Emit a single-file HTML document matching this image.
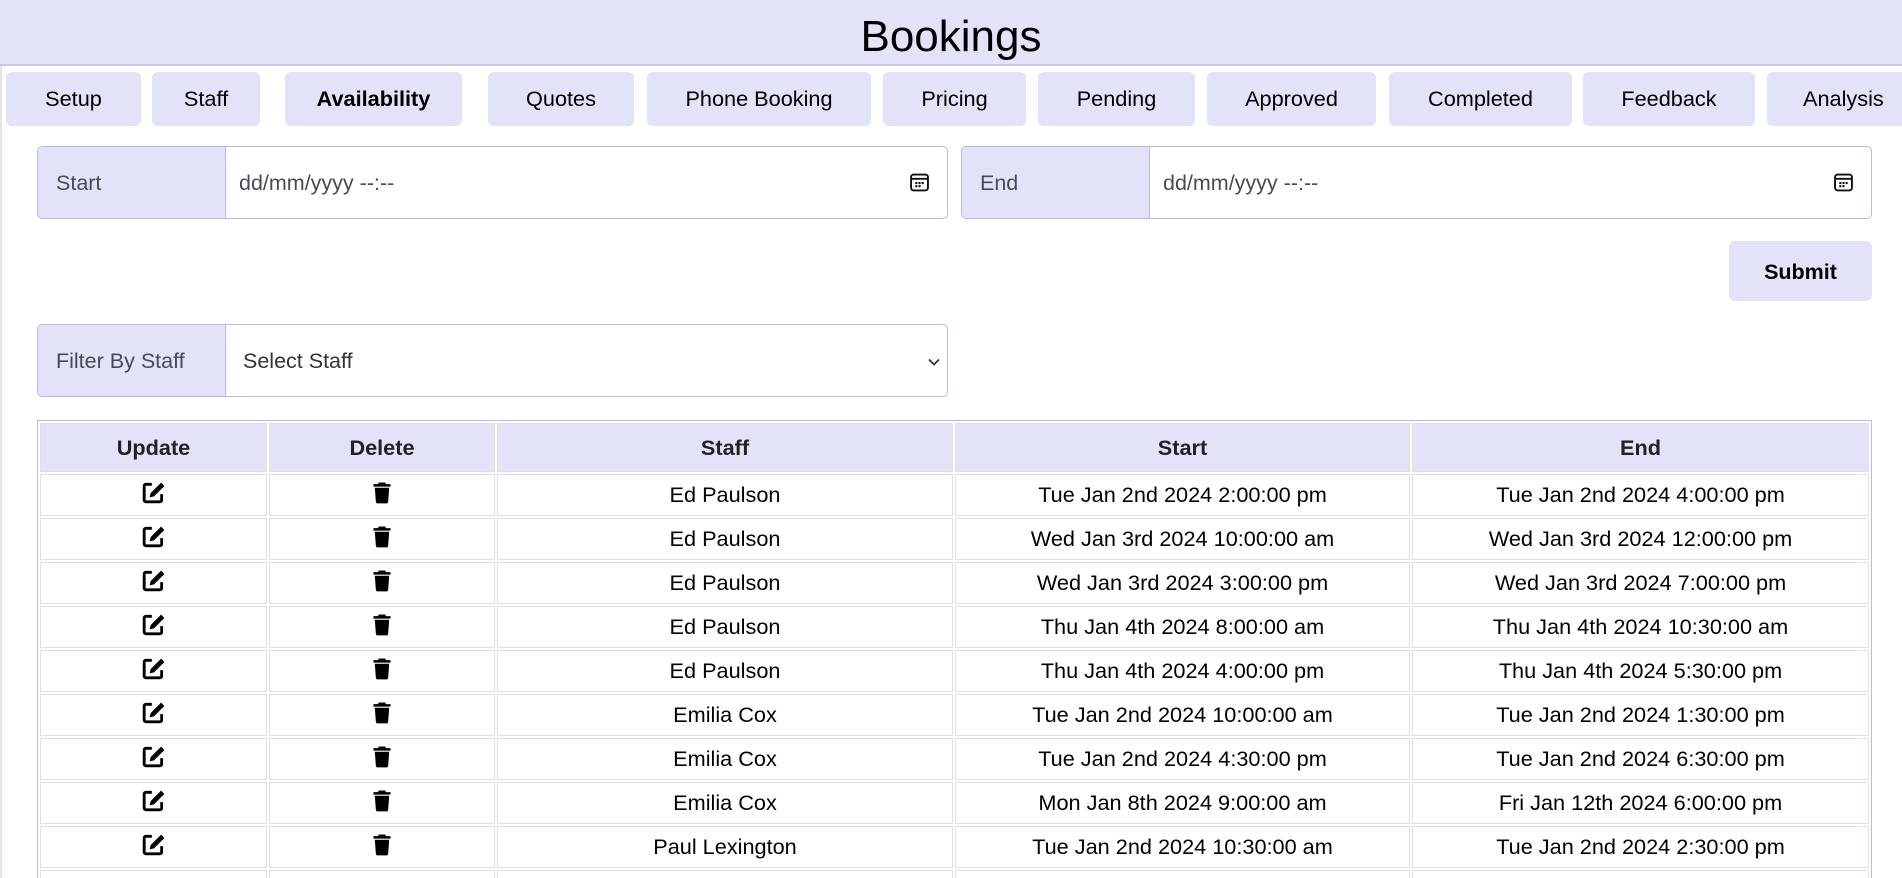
<!DOCTYPE html>
<html><head><meta charset="utf-8"><style>
*{box-sizing:border-box}
html,body{margin:0;width:1902px;height:878px;overflow:hidden}
body{background:#fff;font-family:"Liberation Sans",Arial,sans-serif;color:#000}
.wrap{position:relative;width:1902px;height:878px;overflow:hidden}
.page{position:absolute;left:0;top:0;width:1902px;height:878px;border-left:2px solid #e4e4e4;border-top:2px solid #e4e4e4}
.hdr{position:absolute;left:0;top:0;width:1902px;height:66px;background:#e2e2f8;border-bottom:2px solid #c9c9f0;text-align:center;font-size:44px;line-height:74px}
.tab{position:absolute;top:72px;height:54px;background:#e2e2f8;border-radius:6px;font-size:21.7px;line-height:54px;text-align:center}
.grp{position:absolute;height:73px;border:1.5px solid #b8b8f0;border-radius:5px;overflow:hidden;background:#fff}
.lbl{position:absolute;left:0;top:0;bottom:0;background:#e2e2f8;border-right:1.5px solid #b8b8f0;font-size:21.5px;color:#444c55;line-height:73px;padding-left:18px}
.val{position:absolute;top:0;line-height:73px;font-size:21.5px;color:#444c55}
.cal{position:absolute;top:26px}
.btn{position:absolute;left:1729px;top:241px;width:143px;height:60px;background:#e2e2f8;border-radius:6px;font-weight:bold;font-size:21.5px;line-height:62px;text-align:center}
table{position:absolute;left:37px;top:420px;width:1835px;border:1.5px solid #b8b8f0;border-collapse:separate;border-spacing:2.5px;padding:0}
th,td{border:1.5px solid #e0e0e0;text-align:center;font-size:21.7px;padding:0}
th{background:#e2e2f8;height:49px;font-weight:bold;color:#222}
td{height:42px}
</style></head><body><div class="wrap"><div class="page"></div>
<div class="hdr">Bookings</div>
<div class="tab" style="left:6px;width:135px">Setup</div>
<div class="tab" style="left:152px;width:108px">Staff</div>
<div class="tab" style="left:285px;width:177px;font-weight:bold">Availability</div>
<div class="tab" style="left:488px;width:146px">Quotes</div>
<div class="tab" style="left:647px;width:224px">Phone Booking</div>
<div class="tab" style="left:883px;width:143px">Pricing</div>
<div class="tab" style="left:1038px;width:157px">Pending</div>
<div class="tab" style="left:1207px;width:169px">Approved</div>
<div class="tab" style="left:1389px;width:183px">Completed</div>
<div class="tab" style="left:1583px;width:172px">Feedback</div>
<div class="tab" style="left:1767px;width:150px;text-align:left;padding-left:36px">Analysis</div>

<div class="grp" style="left:37px;top:146px;width:911px"><div class="lbl" style="width:188px">Start</div><div class="val" style="left:201px">dd/mm/yyyy --:--</div>
<svg class="cal" style="left:872px" width="19" height="19" viewBox="0 0 18 18"><rect x="1" y="1.5" width="16" height="15" rx="2.5" fill="none" stroke="#111" stroke-width="1.8"/><line x1="1" y1="5.5" x2="17" y2="5.5" stroke="#111" stroke-width="1.8"/><g fill="#111"><rect x="5" y="8.5" width="2" height="2"/><rect x="8" y="8.5" width="2" height="2"/><rect x="11" y="8.5" width="2" height="2"/><rect x="5" y="11.5" width="2" height="2"/><rect x="8" y="11.5" width="2" height="2"/></g></svg></div>
<div class="grp" style="left:961px;top:146px;width:911px"><div class="lbl" style="width:188px">End</div><div class="val" style="left:201px">dd/mm/yyyy --:--</div>
<svg class="cal" style="left:872px" width="19" height="19" viewBox="0 0 18 18"><rect x="1" y="1.5" width="16" height="15" rx="2.5" fill="none" stroke="#111" stroke-width="1.8"/><line x1="1" y1="5.5" x2="17" y2="5.5" stroke="#111" stroke-width="1.8"/><g fill="#111"><rect x="5" y="8.5" width="2" height="2"/><rect x="8" y="8.5" width="2" height="2"/><rect x="11" y="8.5" width="2" height="2"/><rect x="5" y="11.5" width="2" height="2"/><rect x="8" y="11.5" width="2" height="2"/></g></svg></div>
<div class="btn">Submit</div>
<div class="grp" style="left:37px;top:324px;width:911px"><div class="lbl" style="width:188px">Filter By Staff</div><div class="val" style="left:205px;color:#333">Select Staff</div>
<svg style="position:absolute;left:890px;top:33px" width="12" height="8" viewBox="0 0 12 8"><path d="M1 1.5L6 6.5L11 1.5" fill="none" stroke="#333" stroke-width="1.8"/></svg></div>

<table>
<tr><th style="width:227px">Update</th><th style="width:226px">Delete</th><th style="width:456px">Staff</th><th style="width:455px">Start</th><th>End</th></tr>
<tbody id="b">
</tbody></table>
<script>
var E='<svg width="24" height="23" viewBox="0 0 22 21"><path d="M9 3H3.5A1.5 1.5 0 0 0 2 4.5v13A1.5 1.5 0 0 0 3.5 19h13a1.5 1.5 0 0 0 1.5-1.5V12" fill="none" stroke="#000" stroke-width="2.6"/><path d="M17.5 1.5l3 3L11 14l-4 1 1-4z" fill="#000"/></svg>';
var T='<svg width="18" height="23" viewBox="0 0 17 21"><path d="M5.5 1h6l.8 1.6H16.5v2.4H.5V2.6h4.2z" fill="#000"/><path d="M1.7 6h13.6l-1 13.2a1.8 1.8 0 0 1-1.8 1.6H4.5a1.8 1.8 0 0 1-1.8-1.6z" fill="#000"/></svg>';
var d=[["Ed Paulson","Tue Jan 2nd 2024 2:00:00 pm","Tue Jan 2nd 2024 4:00:00 pm"],
["Ed Paulson","Wed Jan 3rd 2024 10:00:00 am","Wed Jan 3rd 2024 12:00:00 pm"],
["Ed Paulson","Wed Jan 3rd 2024 3:00:00 pm","Wed Jan 3rd 2024 7:00:00 pm"],
["Ed Paulson","Thu Jan 4th 2024 8:00:00 am","Thu Jan 4th 2024 10:30:00 am"],
["Ed Paulson","Thu Jan 4th 2024 4:00:00 pm","Thu Jan 4th 2024 5:30:00 pm"],
["Emilia Cox","Tue Jan 2nd 2024 10:00:00 am","Tue Jan 2nd 2024 1:30:00 pm"],
["Emilia Cox","Tue Jan 2nd 2024 4:30:00 pm","Tue Jan 2nd 2024 6:30:00 pm"],
["Emilia Cox","Mon Jan 8th 2024 9:00:00 am","Fri Jan 12th 2024 6:00:00 pm"],
["Paul Lexington","Tue Jan 2nd 2024 10:30:00 am","Tue Jan 2nd 2024 2:30:00 pm"],
["Paul Lexington","Tue Jan 2nd 2024 3:00:00 pm","Tue Jan 2nd 2024 5:00:00 pm"]];
var h='';d.forEach(function(r){h+='<tr><td>'+E+'</td><td>'+T+'</td><td>'+r[0]+'</td><td>'+r[1]+'</td><td>'+r[2]+'</td></tr>';});
document.getElementById('b').innerHTML=h;
</script>
</div></body></html>
